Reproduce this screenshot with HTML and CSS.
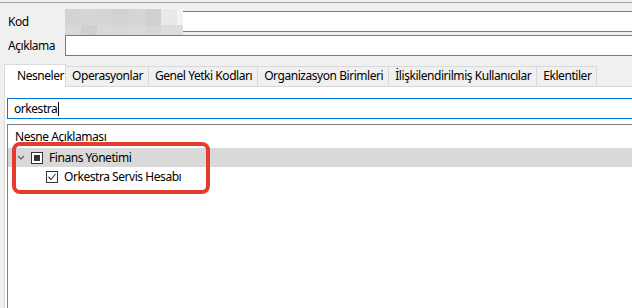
FILE: index.html
```html
<!DOCTYPE html>
<html lang="tr">
<head>
  <meta charset="UTF-8" />
  <title>Rol Tanımı</title>
  <link rel="stylesheet" href="styles.css">
</head>
<body>
  <div class="topline"></div>

  <div class="fields">
    <label>Kod</label>
    <div class="field">
      <input type="text" value="">
      <div class="mosaic">
        <span></span><span></span><span></span><span></span><span></span><span></span><span></span><span></span>
        <span></span><span></span><span></span><span></span><span></span><span></span><span class="wide"></span>
      </div>
    </div>
    <label>Açıklama</label>
    <div class="field">
      <input type="text" value="">
    </div>
  </div>

  <div class="tabs">
    <div class="tab active">Nesneler</div>
    <div class="tab">Operasyonlar</div>
    <div class="tab">Genel Yetki Kodları</div>
    <div class="tab">Organizasyon Birimleri</div>
    <div class="tab">İlişkilendirilmiş Kullanıcılar</div>
    <div class="tab">Eklentiler</div>
  </div>

  <div class="tab-page">
    <div class="search">orkestra<span class="caret"></span></div>

    <div class="tree">
      <div class="tree-header">Nesne Açıklaması</div>

      <div class="node selected">
        <svg class="chevron" width="8" height="6" viewBox="0 0 8 6">
          <polyline points="1,1 4,4 7,1" fill="none" stroke="#6b6b6b" stroke-width="1.4"/>
        </svg>
        <svg class="check" width="12" height="12" viewBox="0 0 12 12">
          <rect x="0.5" y="0.5" width="11" height="11" fill="#fff" stroke="#333"/>
          <rect x="3" y="3" width="6" height="6" fill="#333"/>
        </svg>
        <span>Finans Yönetimi</span>
      </div>

      <div class="node child">
        <svg class="check" width="12" height="12" viewBox="0 0 12 12">
          <rect x="0.5" y="0.5" width="11" height="11" fill="#fff" stroke="#333"/>
          <polyline points="2.5,6 5,8.5 9.5,3" fill="none" stroke="#333" stroke-width="1.1"/>
        </svg>
        <span>Orkestra Servis Hesabı</span>
      </div>

      <div class="highlight"></div>
    </div>
  </div>
</body>
</html>
```

FILE: styles.css
```css
* {
  box-sizing: border-box;
}

body {
  margin: 0;
  height: 308px;
  overflow: hidden;
  font-family: 'Noto Sans', 'Open Sans', sans-serif;
  font-size: 12px;
  letter-spacing: -0.45px;
  color: #000;
  background-color: #f0f0f0;
  display: flex;
  flex-direction: column;
}

.topline {
  margin-top: 2px;
  height: 1px;
  background-color: #a0a0a0;
}

/* kod / açıklama */
.fields {
  display: grid;
  grid-template-columns: 57px 1fr;
  row-gap: 3px;
  padding: 8px 0 0 8px;
  align-items: center;
}

.fields label {
  line-height: 21px;
}

.field {
  position: relative;
  margin-right: -4px;
}

.field input {
  display: block;
  width: 100%;
  height: 21px;
  margin: 0;
  border: 1px solid #7a7a7a;
  background-color: #fff;
  font: inherit;
  outline: none;
}

.mosaic {
  position: absolute;
  left: 0;
  top: -2px;
  width: 118px;
  height: 27px;
  display: grid;
  grid-template-columns: repeat(7, 16px) 6px;
  grid-template-rows: 16px 11px;
}

.mosaic span:nth-child(1) { background: #d3d3d3; }
.mosaic span:nth-child(2) { background: #d6d6d6; }
.mosaic span:nth-child(3) { background: #d4d4d4; }
.mosaic span:nth-child(4) { background: #d2d2d2; }
.mosaic span:nth-child(5) { background: #d5d5d5; }
.mosaic span:nth-child(6) { background: #d0d0d0; }
.mosaic span:nth-child(7) { background: #e9e9e9; }
.mosaic span:nth-child(8) { background: #f3f3f3; }
.mosaic span:nth-child(9) { background: #d8d8d8; }
.mosaic span:nth-child(10) { background: #cfcfcf; }
.mosaic span:nth-child(11) { background: #d9d9d9; }
.mosaic span:nth-child(12) { background: #d7d7d7; }
.mosaic span:nth-child(13) { background: #dadada; }
.mosaic span:nth-child(14) { background: #d6d6d6; }
.mosaic span.wide {
  grid-column: span 2;
  background: #dddddd;
}

/* tabs */
.tabs {
  display: flex;
  align-items: flex-end;
  margin-top: 8px;
  padding-left: 4px;
}

.tab {
  height: 20px;
  line-height: 18px;
  padding: 0 5px 0 6px;
  margin-left: -1px;
  border: 1px solid #d9d9d9;
  border-bottom: none;
  background-color: #f0f0f0;
  white-space: nowrap;
}

.tab.active {
  height: 23px;
  line-height: 21px;
  margin-left: 0;
  margin-bottom: -1px;
  padding: 0 1px 0 12px;
  background-color: #fff;
  position: relative;
  z-index: 1;
}

.tab-page {
  flex: 1;
  display: flex;
  flex-direction: column;
  margin-left: 4px;
  padding: 11px 0 0 2px;
  border-top: 1px solid #d9d9d9;
  border-left: 1px solid #d9d9d9;
  background-color: #fff;
}

.search {
  height: 21px;
  line-height: 19px;
  padding-left: 6px;
  margin-right: -4px;
  border: 1px solid #0078d7;
}

.caret {
  display: inline-block;
  width: 1px;
  height: 14px;
  margin-left: 1px;
  vertical-align: -3px;
  background-color: #000;
}

/* tree */
.tree {
  flex: 1;
  position: relative;
  margin-top: 5px;
  margin-right: -4px;
  border-top: 1px solid #828282;
  border-left: 1px solid #828282;
}

.tree-header {
  height: 23px;
  padding: 3px 0 0 7px;
  line-height: 18px;
}

.node {
  display: flex;
  align-items: center;
  height: 19px;
}

.node.selected {
  background-color: #d9d9d9;
}

.chevron {
  margin-left: 9px;
}

.node.selected .check {
  margin-left: 6px;
}

.node.child .check {
  margin-left: 38px;
}

.node span {
  margin-left: 6px;
}

.highlight {
  position: absolute;
  left: 4px;
  top: 17px;
  width: 198px;
  height: 52px;
  border: 4px solid #e53b2f;
  border-radius: 8px;
}
```
